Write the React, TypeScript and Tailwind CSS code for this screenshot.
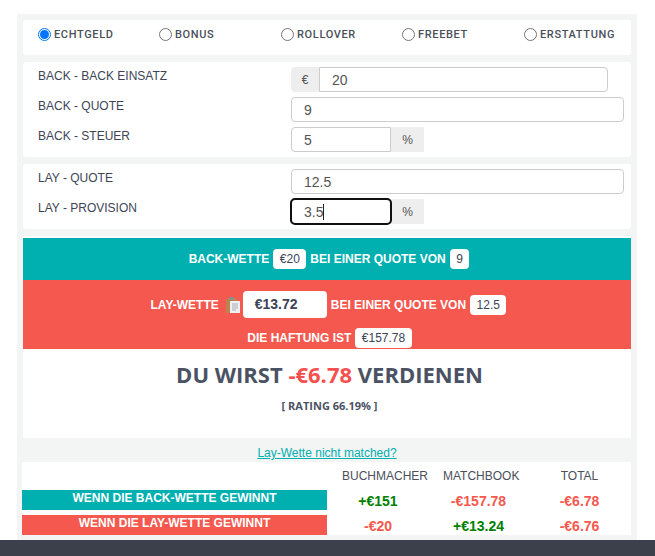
const radios = [
  { label: 'ECHTGELD', checked: true, width: 'w-[121px]' },
  { label: 'BONUS', checked: false, width: 'w-[122px]' },
  { label: 'ROLLOVER', checked: false, width: 'w-[121px]' },
  { label: 'FREEBET', checked: false, width: 'w-[122px]' },
  { label: 'ERSTATTUNG', checked: false, width: 'w-[100px]' },
];

function Radio({ label, checked, width }: { label: string; checked: boolean; width: string }) {
  return (
    <div className={`flex items-center ${width}`}>
      <span
        className={`flex h-[13px] w-[13px] shrink-0 items-center justify-center rounded-full border ${
          checked ? 'border-[#0075ff]' : 'border-[#767676]'
        } bg-white`}
      >
        {checked && <span className="h-[9px] w-[9px] rounded-full bg-[#0075ff]" />}
      </span>
      <span className="ml-[3px] font-['Roboto',sans-serif] text-[11px] leading-[13px] font-medium tracking-[0.65px] text-[#4a4f5a]">
        {label}
      </span>
    </div>
  );
}

function Field({ label, children }: { label: string; children: React.ReactNode }) {
  return (
    <div className="flex h-[25px]">
      <div className="w-[253px] shrink-0 pt-[2px] text-[12px] leading-[14px] text-[#3c4456]">{label}</div>
      <div className="flex">{children}</div>
    </div>
  );
}

const inputBox = 'flex h-[25px] items-center border border-[#ccc] bg-white pt-[1px] pl-[12px] text-[14px] text-[#555]';
const addon = 'flex h-[25px] items-center justify-center bg-[#eee] border border-[#eee] text-[12px] text-[#555]';

function Pill({ children, className = '' }: { children: React.ReactNode; className?: string }) {
  return (
    <span className={`mx-[4px] inline-flex h-[20px] items-center rounded-[4px] bg-white px-[6.5px] text-[12px] font-normal text-[#3c4456] ${className}`}>
      {children}
    </span>
  );
}

function ClipboardIcon() {
  return (
    <svg width="14" height="16" viewBox="0 0 14 16" className="ml-[7px] mr-[3px] shrink-0">
      <rect x="0" y="1.5" width="11" height="14.5" rx="1" fill="#b9844f" />
      <rect x="3" y="0" width="5" height="3" rx="0.5" fill="#8d8d8d" />
      <rect x="4" y="4" width="10" height="12" fill="#eef0f2" />
      <path d="M6 7h6M6 9h6M6 11h6M6 13h4" stroke="#a9adb3" strokeWidth="1" />
    </svg>
  );
}

function ResultRow({ label, color, book, match, total, bookColor, matchColor, mt }: {
  label: string;
  color: string;
  book: string;
  match: string;
  total: string;
  bookColor: string;
  matchColor: string;
  mt: string;
}) {
  return (
    <div className={`flex h-[20px] ${mt}`}>
      <div className={`w-[305px] pt-[1px] text-center text-[12px] leading-[15px] font-bold text-white ${color}`}>{label}</div>
      <div className={`w-[102px] pt-[3px] text-center text-[14px] leading-[16px] font-bold ${bookColor}`}>{book}</div>
      <div className={`w-[99px] pt-[3px] text-center text-[14px] leading-[16px] font-bold ${matchColor}`}>{match}</div>
      <div className="w-[103px] pt-[3px] text-center text-[14px] leading-[16px] font-bold text-[#f5584e]">{total}</div>
    </div>
  );
}

export default function App() {
  return (
    <div className="flex h-[556px] w-[655px] flex-col overflow-hidden bg-white font-['Liberation_Sans',sans-serif]">
      <div className="mx-[17px] mt-[14px] flex h-[526px] w-[620px] flex-col bg-[#f3f4f4] px-[6px] pt-[6px]">
        <div className="flex h-[35px] items-start rounded-[3px] bg-white pt-[8px] pl-[15px]">
          {radios.map((r) => (
            <Radio key={r.label} {...r} />
          ))}
        </div>

        <div className="mt-[7px] flex h-[95px] flex-col gap-[5px] rounded-[3px] bg-white pt-[5px] pl-[15px]">
          <Field label="BACK - BACK EINSATZ">
            <span className={`${addon} w-[28px] rounded-l-[4px]`}>€</span>
            <div className={`${inputBox} w-[289px] rounded-r-[4px]`}>20</div>
          </Field>
          <Field label="BACK - QUOTE">
            <div className={`${inputBox} w-[333px] rounded-[4px]`}>9</div>
          </Field>
          <Field label="BACK - STEUER">
            <div className={`${inputBox} w-[100px] rounded-l-[4px]`}>5</div>
            <span className={`${addon} w-[33px]`}>%</span>
          </Field>
        </div>

        <div className="mt-[7px] flex h-[65px] flex-col gap-[5px] rounded-[3px] bg-white pt-[5px] pl-[15px]">
          <Field label="LAY - QUOTE">
            <div className={`${inputBox} w-[333px] rounded-[4px]`}>12.5</div>
          </Field>
          <Field label="LAY - PROVISION">
            <div className={`${inputBox} relative z-10 w-[100px] rounded-[4px] outline-2 -outline-offset-1 outline-[#101010]`}>
              3.5<span className="h-[16px] w-px bg-[#222]" />
            </div>
            <span className={`${addon} w-[33px]`}>%</span>
          </Field>
        </div>

        <div className="mt-[7px] h-[2px] bg-white" />
        <div className="flex h-[42px] items-center justify-center bg-[#00afb0] pb-[1px] pl-[8px] text-[12px] font-bold text-white">
          BACK-WETTE<Pill>€20</Pill>BEI EINER QUOTE VON<Pill>9</Pill>
        </div>
        <div className="flex h-[69px] flex-col items-center bg-[#f5584e] text-[12px] font-bold text-white">
          <div className="flex h-[38px] items-center pt-[11px] pl-[7px]">
            LAY-WETTE
            <ClipboardIcon />
            <span className="flex h-[27px] w-[84px] items-center rounded-[4px] bg-white pl-[12px] text-[14px] text-[#3c4456]">€13.72</span>
            <span className="ml-[4px]">BEI EINER QUOTE VON</span>
            <Pill>12.5</Pill>
          </div>
          <div className="mt-[10px] flex h-[20px] items-center pl-[5px]">
            DIE HAFTUNG IST<Pill className="mr-0">€157.78</Pill>
          </div>
        </div>
        <div className="flex h-[89px] flex-col items-center bg-white pl-[5px] font-['Open_Sans',sans-serif] font-bold text-[#4a5264]">
          <div className="mt-[8px] text-[22px] leading-[34px]">
            DU WIRST <span className="text-[#f5504e]">-€6.78</span> VERDIENEN
          </div>
          <div className="mt-[8px] text-[11px] leading-[14px]">[ RATING 66.19% ]</div>
        </div>

        <div className="mt-[7px] h-[17px] pt-[1px] text-center text-[12px] leading-[15px] text-[#00afb0] underline">Lay-Wette nicht matched?</div>
        <div className="-ml-px h-[73px] w-[609px] bg-white">
          <div className="flex h-[28px] text-[12px] leading-[28px] text-[#4a4f5a]">
            <div className="w-[305px]" />
            <div className="w-[102px] pl-[15px] whitespace-nowrap">BUCHMACHER</div>
            <div className="w-[99px] pl-[14px] whitespace-nowrap">MATCHBOOK</div>
            <div className="w-[103px] text-center">TOTAL</div>
          </div>
          <ResultRow label="WENN DIE BACK-WETTE GEWINNT" color="bg-[#00afb0]" book="+€151" match="-€157.78" total="-€6.78" bookColor="text-[#008000]" matchColor="text-[#f5584e]" mt="" />
          <ResultRow label="WENN DIE LAY-WETTE GEWINNT" color="bg-[#f5584e]" book="-€20" match="+€13.24" total="-€6.76" bookColor="text-[#f5584e]" matchColor="text-[#008000]" mt="mt-[5px]" />
        </div>
      </div>
      <div className="flex-1 bg-[#3c404b]" />
    </div>
  );
}
